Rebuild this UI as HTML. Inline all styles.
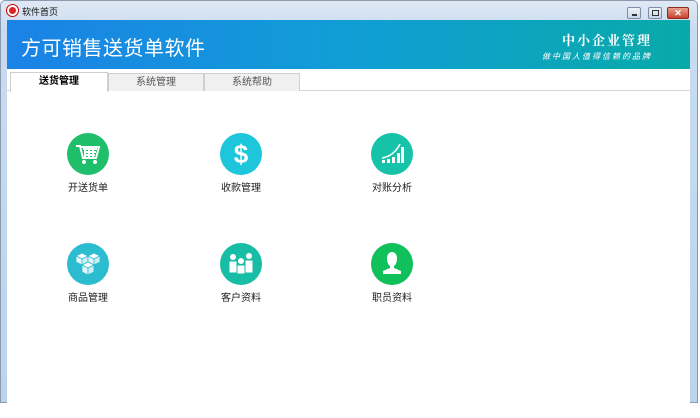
<!DOCTYPE html>
<html><head><meta charset="utf-8"><style>
*{margin:0;padding:0;box-sizing:border-box}
body{width:700px;height:418px;background:#fff;position:relative;overflow:hidden;font-family:"Liberation Sans","Noto Sans CJK SC",sans-serif}
.frame{position:absolute;left:0;top:0;width:698px;height:403px;background:linear-gradient(#dfe9f5,#c9dbef 30px,#bcd3ec);border:1px solid #8a9bb0;border-radius:5px 5px 0 0}
.title{position:absolute;left:22px;top:5px;font-size:9px;color:#111}
.logo{position:absolute;left:7px;top:5px;width:11px;height:11px;border-radius:50%;background:#d8232a;border:2px solid #fff;box-shadow:0 0 0 1px #c00}
.btn{position:absolute;top:7px;height:12px;border:1px solid #7d8ea5;border-radius:2px;background:linear-gradient(#eef3fa,#c8d6e8)}
.client{position:absolute;left:7px;top:20px;width:683px;height:383px;background:#fff}
.hdr{position:absolute;left:0;top:0;width:683px;height:49px;background:linear-gradient(90deg,#1b82e6 0%,#119ed6 50%,#08aaa8 100%)}
.hdr h1{position:absolute;left:14px;top:12px;font-weight:normal;font-size:20px;color:#fff;letter-spacing:0.5px}
.r1{position:absolute;right:38px;top:10px;color:#fff;font-size:13px;font-weight:bold;letter-spacing:2px;font-family:"Noto Serif CJK SC",serif}
.r2{position:absolute;right:38px;top:31px;color:#fff;font-size:8px;letter-spacing:2px;font-style:italic}
.tabline{position:absolute;left:0;top:70px;width:683px;height:1px;background:#d6d6d6}
.tab{position:absolute;top:53px;height:18px;font-size:10px;color:#555;text-align:center;line-height:17px;background:#f0f0f0;border:1px solid #cfcfcf;border-bottom:none}
.tab.a{background:#fff;color:#000;font-weight:bold;top:52px;height:20px}
.it{position:absolute;width:80px;text-align:center;font-size:10px;color:#222}
.it svg{display:block;margin:0 auto 4px}
</style></head><body>
<div class="frame"></div>
<div class="logo"></div><div class="title">软件首页</div>
<div class="btn" style="left:627px;width:14px"><div style="position:absolute;left:4px;top:6px;width:5px;height:2px;background:#333"></div></div>
<div class="btn" style="left:648px;width:14px"><div style="position:absolute;left:3px;top:2px;width:7px;height:6px;border:1px solid #333"></div></div>
<div class="btn" style="left:667px;width:22px;background:linear-gradient(#e8a090,#c8402a);border-color:#8b2a1e;color:#fff;font-size:9px;text-align:center;line-height:10px;font-weight:bold">✕</div>
<div class="client">
<div class="hdr"><h1>方可销售送货单软件</h1><div class="r1">中小企业管理</div><div class="r2">做中国人值得信赖的品牌</div></div>
<div class="tabline"></div>
<div class="tab a" style="left:3px;width:98px">送货管理</div>
<div class="tab" style="left:101px;width:96px">系统管理</div>
<div class="tab" style="left:197px;width:96px">系统帮助</div>

<div class="it" style="left:41px;top:113px"><svg width="42" height="42" viewBox="0 0 42 42"><circle cx="21" cy="21" r="21" fill="#1fbe6a"/><path d="M9 13h4l3 12h13l3-11H14M16 16h14M17 19h12M18 22h10M18 16v9M22 16v9M26 16v9" stroke="#fff" stroke-width="2" fill="none"/><circle cx="17" cy="29" r="2" fill="#fff"/><circle cx="28" cy="29" r="2" fill="#fff"/></svg>开送货单</div>
<div class="it" style="left:194px;top:113px"><svg width="42" height="42" viewBox="0 0 42 42"><circle cx="21" cy="21" r="21" fill="#1ec6dc"/><text x="21" y="30" text-anchor="middle" font-size="26" font-weight="bold" fill="#fff" font-family="Liberation Sans">$</text></svg>收款管理</div>
<div class="it" style="left:345px;top:113px"><svg width="42" height="42" viewBox="0 0 42 42"><circle cx="21" cy="21" r="21" fill="#16c2a8"/><path d="M11 25q12-2 18-14" stroke="#fff" stroke-width="1.5" fill="none"/><rect x="11" y="27" width="3" height="3" fill="#fff"/><rect x="16" y="26" width="3" height="4" fill="#fff"/><rect x="21" y="24" width="3" height="6" fill="#fff"/><rect x="26" y="20" width="3" height="10" fill="#fff"/><rect x="30" y="14" width="3" height="16" fill="#fff"/></svg>对账分析</div>

<div class="it" style="left:41px;top:223px"><svg width="42" height="42" viewBox="0 0 42 42"><circle cx="21" cy="21" r="21" fill="#2cbccf"/>
<g stroke="#2cbccf" stroke-width="0.8"><path d="M9 13l6-3 6 3-6 3z" fill="#fff"/><path d="M9 13v6l6 3v-6z" fill="#e6f6f8"/><path d="M21 13v6l-6 3v-6z" fill="#cdeef2"/>
<path d="M21 13l6-3 6 3-6 3z" fill="#fff"/><path d="M21 13v6l6 3v-6z" fill="#e6f6f8"/><path d="M33 13v6l-6 3v-6z" fill="#cdeef2"/>
<path d="M15 22l6-3 6 3-6 3z" fill="#fff"/><path d="M15 22v7l6 3v-7z" fill="#e6f6f8"/><path d="M27 22v7l-6 3v-7z" fill="#cdeef2"/></g></svg>商品管理</div>
<div class="it" style="left:194px;top:223px"><svg width="42" height="42" viewBox="0 0 42 42"><circle cx="21" cy="21" r="21" fill="#17bda5"/><circle cx="13" cy="14" r="3" fill="#fff"/><circle cx="29" cy="13" r="3" fill="#fff"/><circle cx="21" cy="18" r="3" fill="#fff"/><path d="M9 18h8v12H9zM25 17h8v13h-8zM17 22h8v9h-8z" fill="#fff" stroke="#17bda5" stroke-width="1"/></svg>客户资料</div>
<div class="it" style="left:345px;top:223px"><svg width="42" height="42" viewBox="0 0 42 42"><circle cx="21" cy="21" r="21" fill="#10c05a"/><path d="M16 15a5 6 0 0 1 10 0q0 6-3 8v2l7 3v3H12v-3l7-3v-2q-3-2-3-8z" fill="#fff"/></svg>职员资料</div>
</div>
</body></html>
